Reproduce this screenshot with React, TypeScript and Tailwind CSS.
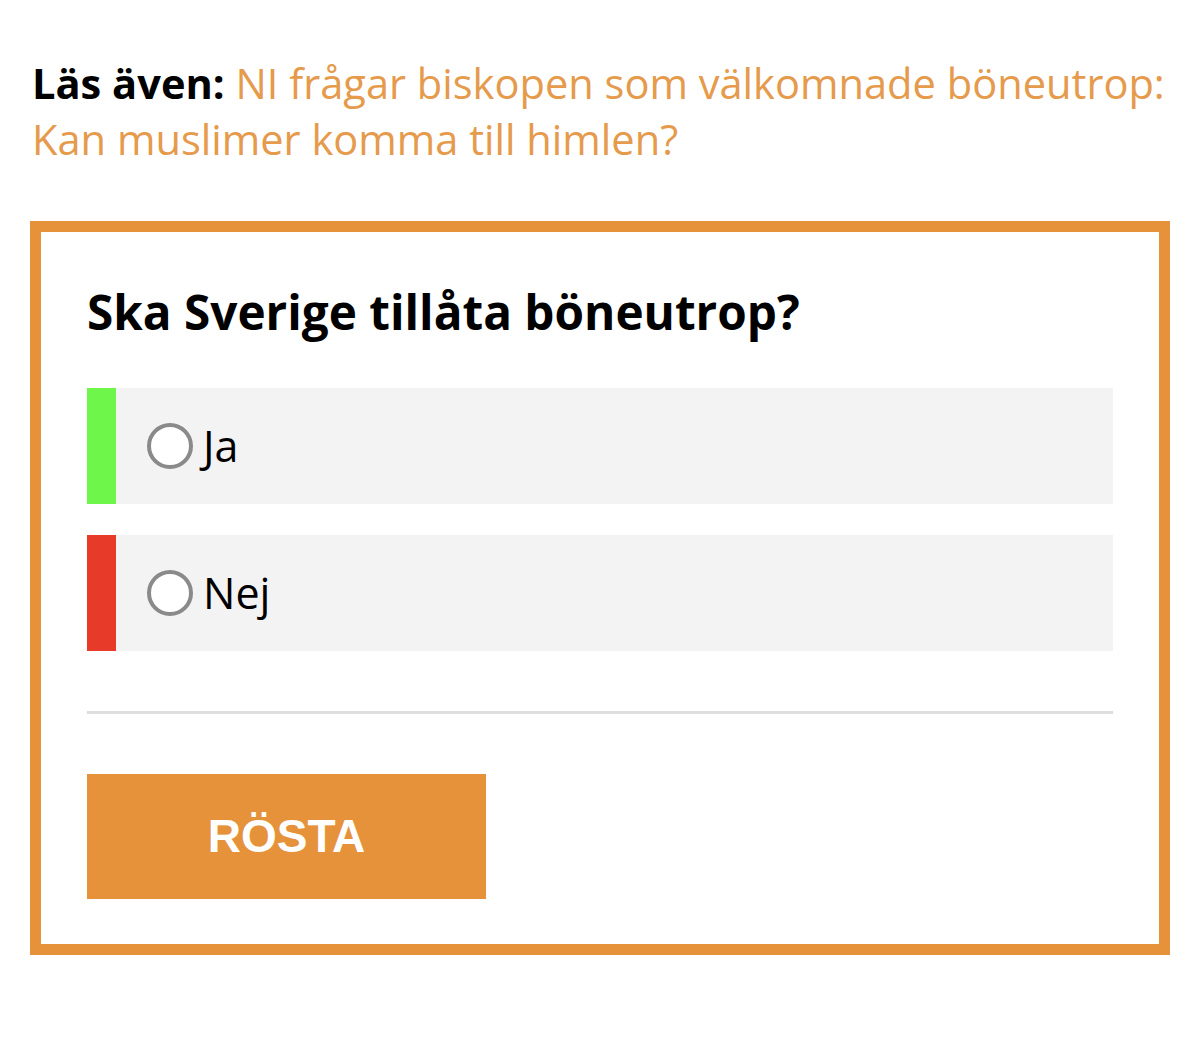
export default function App() {
  return (
    <div className="min-h-[1039px] w-[1200px] bg-white font-['Open_Sans',sans-serif]">
      <div className="pt-[55px] pl-[32px] pr-[10px]">
        <p className="text-[41.6px] leading-[56px] whitespace-nowrap text-[#e59a4c]">
          <span className="font-bold text-black">Läs även:</span>{" "}
          NI frågar biskopen som välkomnade böneutrop:
          <br />
          Kan muslimer komma till himlen?
        </p>
      </div>

      <div className="mt-[54px] ml-[30px] w-[1140px] border-[11px] border-[#e5923b] px-[46px] pt-[50px] pb-[45px]">
        <h2 className="text-[47.7px] font-bold leading-[60px] text-black">
          Ska Sverige tillåta böneutrop?
        </h2>

        <div className="mt-[46px] flex flex-col gap-[31px]">
          <Option label="Ja" color="bg-[#6ff64b]" />
          <Option label="Nej" color="bg-[#e73a29]" />
        </div>

        <div className="mt-[60px] h-[3px] bg-[#dedede]" />

        <button className="mt-[60px] flex h-[125px] w-[399px] items-center justify-center bg-[#e5923b] font-['Liberation_Sans',sans-serif] text-[46px] font-bold text-white">
          RÖSTA
        </button>
      </div>
    </div>
  );
}

function Option({ label, color }: { label: string; color: string }) {
  return (
    <div className="flex h-[116px] items-center bg-[#f3f3f3]">
      <div className={`h-full w-[29px] ${color}`} />
      <div className="ml-[31px] h-[46px] w-[46px] rounded-full border-[4px] border-[#8a8a8a] bg-white" />
      <span className="ml-[10px] text-[43px] text-black">{label}</span>
    </div>
  );
}
